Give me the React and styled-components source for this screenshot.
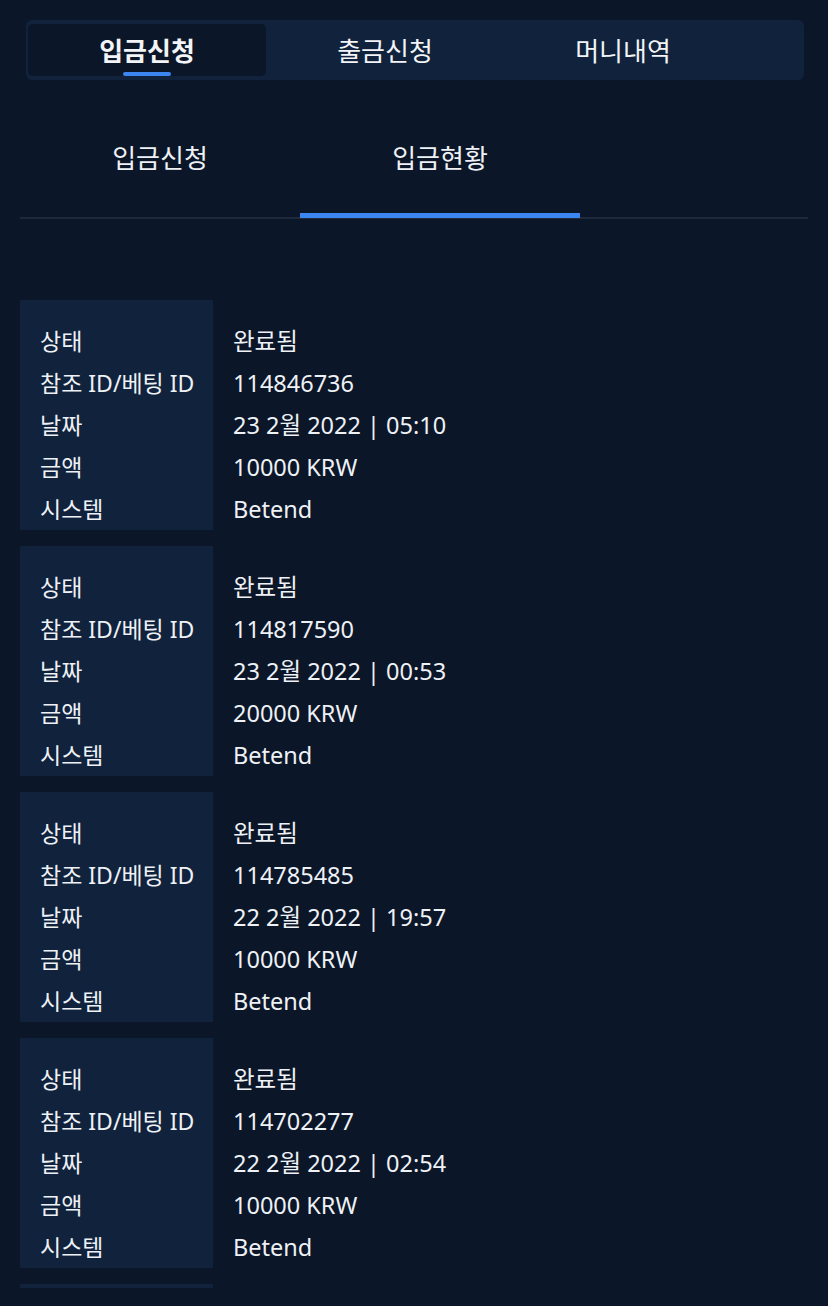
import React from "react";
import styled, { createGlobalStyle } from "styled-components";

const Global = createGlobalStyle`
  html, body { margin: 0; padding: 0; background: #0b1628; }
  body { font-family: "Noto Sans", "Noto Sans CJK KR", sans-serif; color: #eef1f5; }
`;

const Page = styled.div`
  width: 828px;
  height: 1306px;
  background: #0b1628;
  padding: 20px 20px 0;
  box-sizing: border-box;
  overflow: hidden;
`;

const TopBar = styled.div`
  margin: 0 4px 0 6px;
  height: 60px;
  background: #10223c;
  border-radius: 6px;
  padding: 4px 2px;
  box-sizing: border-box;
  display: flex;
`;

const TopTab = styled.div`
  position: relative;
  width: 238px;
  display: flex;
  align-items: center;
  justify-content: center;
  border-radius: 5px;
  background: ${(p) => (p.$active ? "#0b1628" : "transparent")};
  font-size: 26px;
  font-weight: ${(p) => (p.$active ? 700 : 400)};
  color: #f2f4f7;
`;

const TopIndicator = styled.span`
  position: absolute;
  left: 50%;
  bottom: 0;
  transform: translateX(-50%);
  width: 48px;
  height: 4px;
  border-radius: 2px;
  background: #3b86f0;
`;

const SubTabs = styled.div`
  margin-top: 38px;
  display: flex;
  border-bottom: 2px solid #1e2a3b;
`;

const SubTab = styled.div`
  width: 280px;
  height: 100px;
  display: flex;
  align-items: center;
  justify-content: center;
  padding-bottom: 18px;
  box-sizing: border-box;
  font-size: 26px;
  color: #eef1f5;
  border-bottom: 5px solid ${(p) => (p.$active ? "#3b86f0" : "transparent")};
  margin-bottom: -1px;
`;

const List = styled.div`
  margin-top: 81px;
  display: flex;
  flex-direction: column;
  align-items: flex-start;
  gap: 16px;
`;

const Card = styled.div`
  display: grid;
  width: 100%;
  grid-template-columns: 193px 1fr;
  height: 230px;
`;

const StubCard = styled.div`
  width: 193px;
  height: 4px;
  background: #10223c;
`;

const LabelCol = styled.div`
  background: #10223c;
  padding: 20px 0 0 20px;
  display: flex;
  flex-direction: column;
`;

const ValueCol = styled.div`
  padding: 20px 0 0 20px;
  display: flex;
  flex-direction: column;
`;

const Cell = styled.div`
  height: 42px;
  line-height: 42px;
  font-size: ${(p) => (p.$label ? "23px" : "23.5px")};
  white-space: nowrap;
  color: #eef1f5;
`;

const labels = ["상태", "참조 ID/베팅 ID", "날짜", "금액", "시스템"];

const rows = [
  { id: "114846736", date: "23 2월 2022 | 05:10", amount: "10000 KRW" },
  { id: "114817590", date: "23 2월 2022 | 00:53", amount: "20000 KRW" },
  { id: "114785485", date: "22 2월 2022 | 19:57", amount: "10000 KRW" },
  { id: "114702277", date: "22 2월 2022 | 02:54", amount: "10000 KRW" },
];

export default function App() {
  return (
    <>
      <Global />
      <Page>
        <TopBar>
          <TopTab $active>
            입금신청
            <TopIndicator />
          </TopTab>
          <TopTab>출금신청</TopTab>
          <TopTab>머니내역</TopTab>
        </TopBar>
        <SubTabs>
          <SubTab>입금신청</SubTab>
          <SubTab $active>입금현황</SubTab>
        </SubTabs>
        <List>
          {rows.map((r) => (
            <Card key={r.id}>
              <LabelCol>
                {labels.map((l) => (
                  <Cell $label key={l}>{l}</Cell>
                ))}
              </LabelCol>
              <ValueCol>
                <Cell>완료됨</Cell>
                <Cell>{r.id}</Cell>
                <Cell>{r.date}</Cell>
                <Cell>{r.amount}</Cell>
                <Cell>Betend</Cell>
              </ValueCol>
            </Card>
          ))}
          <StubCard />
        </List>
      </Page>
    </>
  );
}
